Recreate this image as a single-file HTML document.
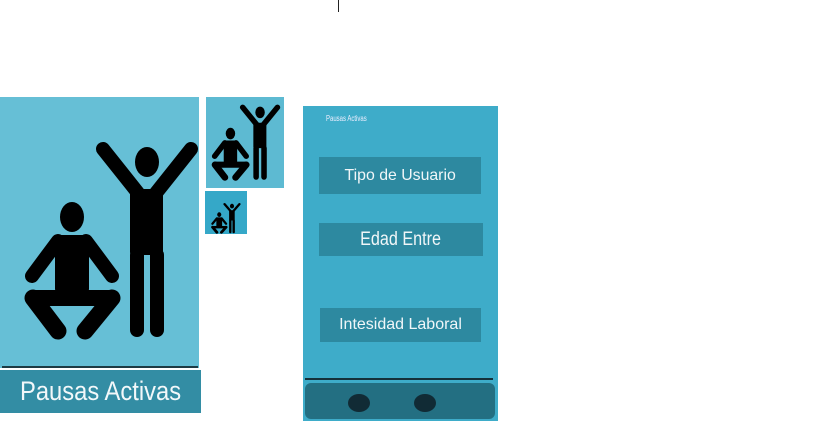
<!DOCTYPE html>
<html><head><meta charset="utf-8"><style>
body{margin:0;width:840px;height:421px;background:#fff;position:relative;overflow:hidden;font-family:"Liberation Sans",sans-serif}
div{position:absolute;box-sizing:border-box}
.btn{background:#2d89a0;font-size:16px;display:flex;align-items:center;justify-content:center;color:#f0f6f8}
.btn span{display:inline-block}
</style></head><body>
<div style="left:338px;top:0;width:1px;height:12px;background:#222"></div>
<div style="left:0;top:97px;width:199px;height:271px;background:#66bfd6"></div>
<div style="left:2px;top:366px;width:196px;height:2px;background:#1d3b44"></div>
<div style="left:0;top:370px;width:201px;height:43px;background:#338da4;color:#f2f8fa;font-size:27px;display:flex;align-items:center;justify-content:center"><span style="display:inline-block;transform:scaleX(0.88)">Pausas Activas</span></div>
<div style="left:206px;top:97px;width:78px;height:91px;background:#5dbad2"></div>
<div style="left:205px;top:191px;width:42px;height:43px;background:#35a8c8"></div>
<div style="left:303px;top:106px;width:195px;height:315px;background:#3eacc9"></div>
<div style="left:326px;top:114px;font-size:8px;color:#eef;transform:scaleX(0.75);transform-origin:left">Pausas Activas</div>
<div class="btn" style="left:319px;top:157px;width:162px;height:37px"><span style="transform:scaleX(0.99)">Tipo de Usuario</span></div>
<div class="btn" style="left:319px;top:223px;width:164px;height:33px;font-size:19px"><span style="transform:scaleX(0.85)">Edad Entre</span></div>
<div class="btn" style="left:320px;top:308px;width:161px;height:34px"><span style="transform:scaleX(1.0)">Intesidad Laboral</span></div>
<div style="left:305px;top:378px;width:188px;height:2px;background:#15313a"></div>
<div style="left:305px;top:383px;width:190px;height:36px;background:#236f82;border-radius:6px"></div>
<div style="left:348px;top:394px;width:22px;height:18px;border-radius:50%;background:#112b35"></div>
<div style="left:414px;top:394px;width:22px;height:18px;border-radius:50%;background:#112b35"></div>
<svg width="840" height="421" style="position:absolute;left:0;top:0">
<defs><g id="f">
<g fill="#000"><ellipse cx="147" cy="162" rx="12" ry="15"/><ellipse cx="72" cy="217" rx="12" ry="15"/>
<rect x="130" y="189" width="33" height="66" rx="3"/><rect x="55" y="235" width="34" height="58" rx="4"/>
<rect x="26" y="290" width="93" height="16" rx="8"/></g>
<g stroke="#000" stroke-width="14" stroke-linecap="round" fill="none">
<path d="M103 149L138 193M191 149L156 193"/>
<path d="M137 255V330M157 255V330"/>
<path d="M58 241L32 276M86 241L112 276"/>
</g>
<path d="M33 298L58 331M112 298L85 331" stroke="#000" stroke-width="17" stroke-linecap="round" fill="none"/>
</g></defs>
<use href="#f"/>
<use href="#f" transform="translate(202 50) scale(0.395 0.385)"/>
<use href="#f" transform="translate(207 181) scale(0.17 0.155)"/>
</svg>
</body></html>
